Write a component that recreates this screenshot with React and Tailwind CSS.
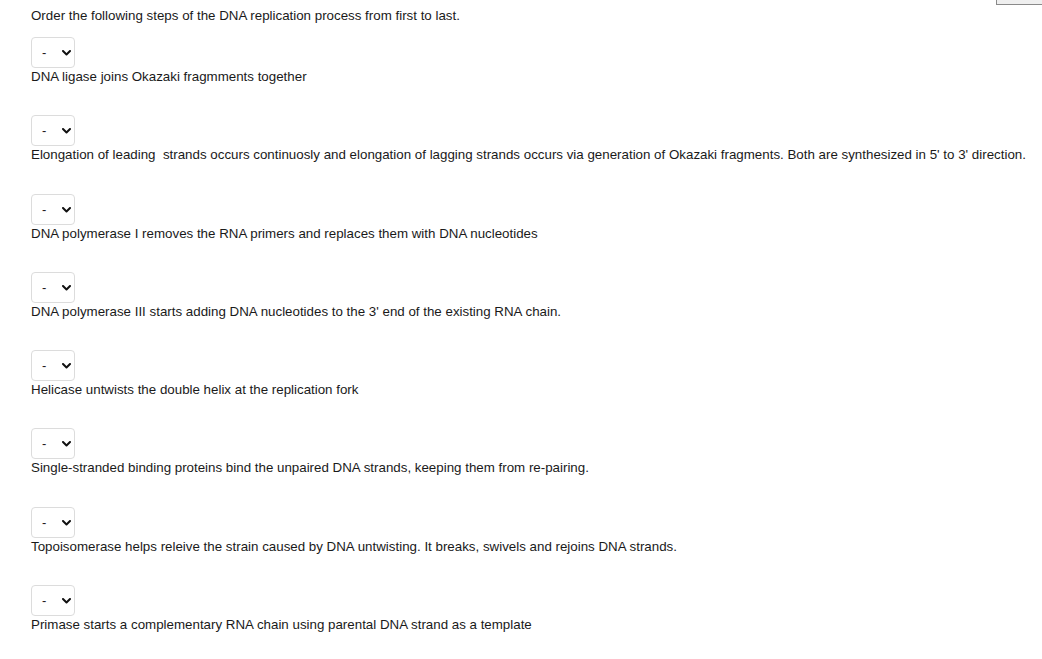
import React from "react";

const steps = [
  "DNA ligase joins Okazaki fragmments together",
  "Elongation of leading  strands occurs continuosly and elongation of lagging strands occurs via generation of Okazaki fragments. Both are synthesized in 5' to 3' direction.",
  "DNA polymerase I removes the RNA primers and replaces them with DNA nucleotides",
  "DNA polymerase III starts adding DNA nucleotides to the 3' end of the existing RNA chain.",
  "Helicase untwists the double helix at the replication fork",
  "Single-stranded binding proteins bind the unpaired DNA strands, keeping them from re-pairing.",
  "Topoisomerase helps releive the strain caused by DNA untwisting. It breaks, swivels and rejoins DNA strands.",
  "Primase starts a complementary RNA chain using parental DNA strand as a template",
];

function OrderSelect() {
  return (
    <div className="relative w-[44px] h-[31px]">
      <select
        defaultValue="-"
        className="appearance-none w-full h-full rounded-[4px] border border-[#dcdcdc] bg-white pl-[10px] text-[13px] text-[#1a1a1a] outline-none"
        style={{ fontFamily: '"Liberation Sans", Arial, sans-serif' }}
      >
        <option value="-">-</option>
        {steps.map((_, i) => (
          <option key={i} value={String(i + 1)}>
            {i + 1}
          </option>
        ))}
      </select>
      <svg
        className="pointer-events-none absolute left-[31px] top-[13px]"
        width="9"
        height="6"
        viewBox="0 0 9 6"
        fill="none"
      >
        <path d="M1 1l3.5 3.5L8 1" stroke="#111" strokeWidth="2" strokeLinecap="round" strokeLinejoin="round" />
      </svg>
    </div>
  );
}

export default function App() {
  return (
    <div
      className="relative min-h-[659px] bg-white pl-[31px] pt-[8px] text-[13.33px] leading-[15px] text-[#1a1a1a]"
      style={{ fontFamily: '"Liberation Sans", Arial, sans-serif' }}
    >
      <div className="absolute right-0 top-0 h-[5px] w-[46px] border-b border-l border-[#8a8a8a] bg-[#efefef]" />
      <p>Order the following steps of the DNA replication process from first to last.</p>
      <div className="mt-[14px] flex flex-col gap-[31.3px]">
        {steps.map((s, i) => (
          <div key={i} className="flex flex-col items-start">
            <OrderSelect />
            <p className="mt-[1px] whitespace-pre">{s}</p>
          </div>
        ))}
      </div>
    </div>
  );
}
